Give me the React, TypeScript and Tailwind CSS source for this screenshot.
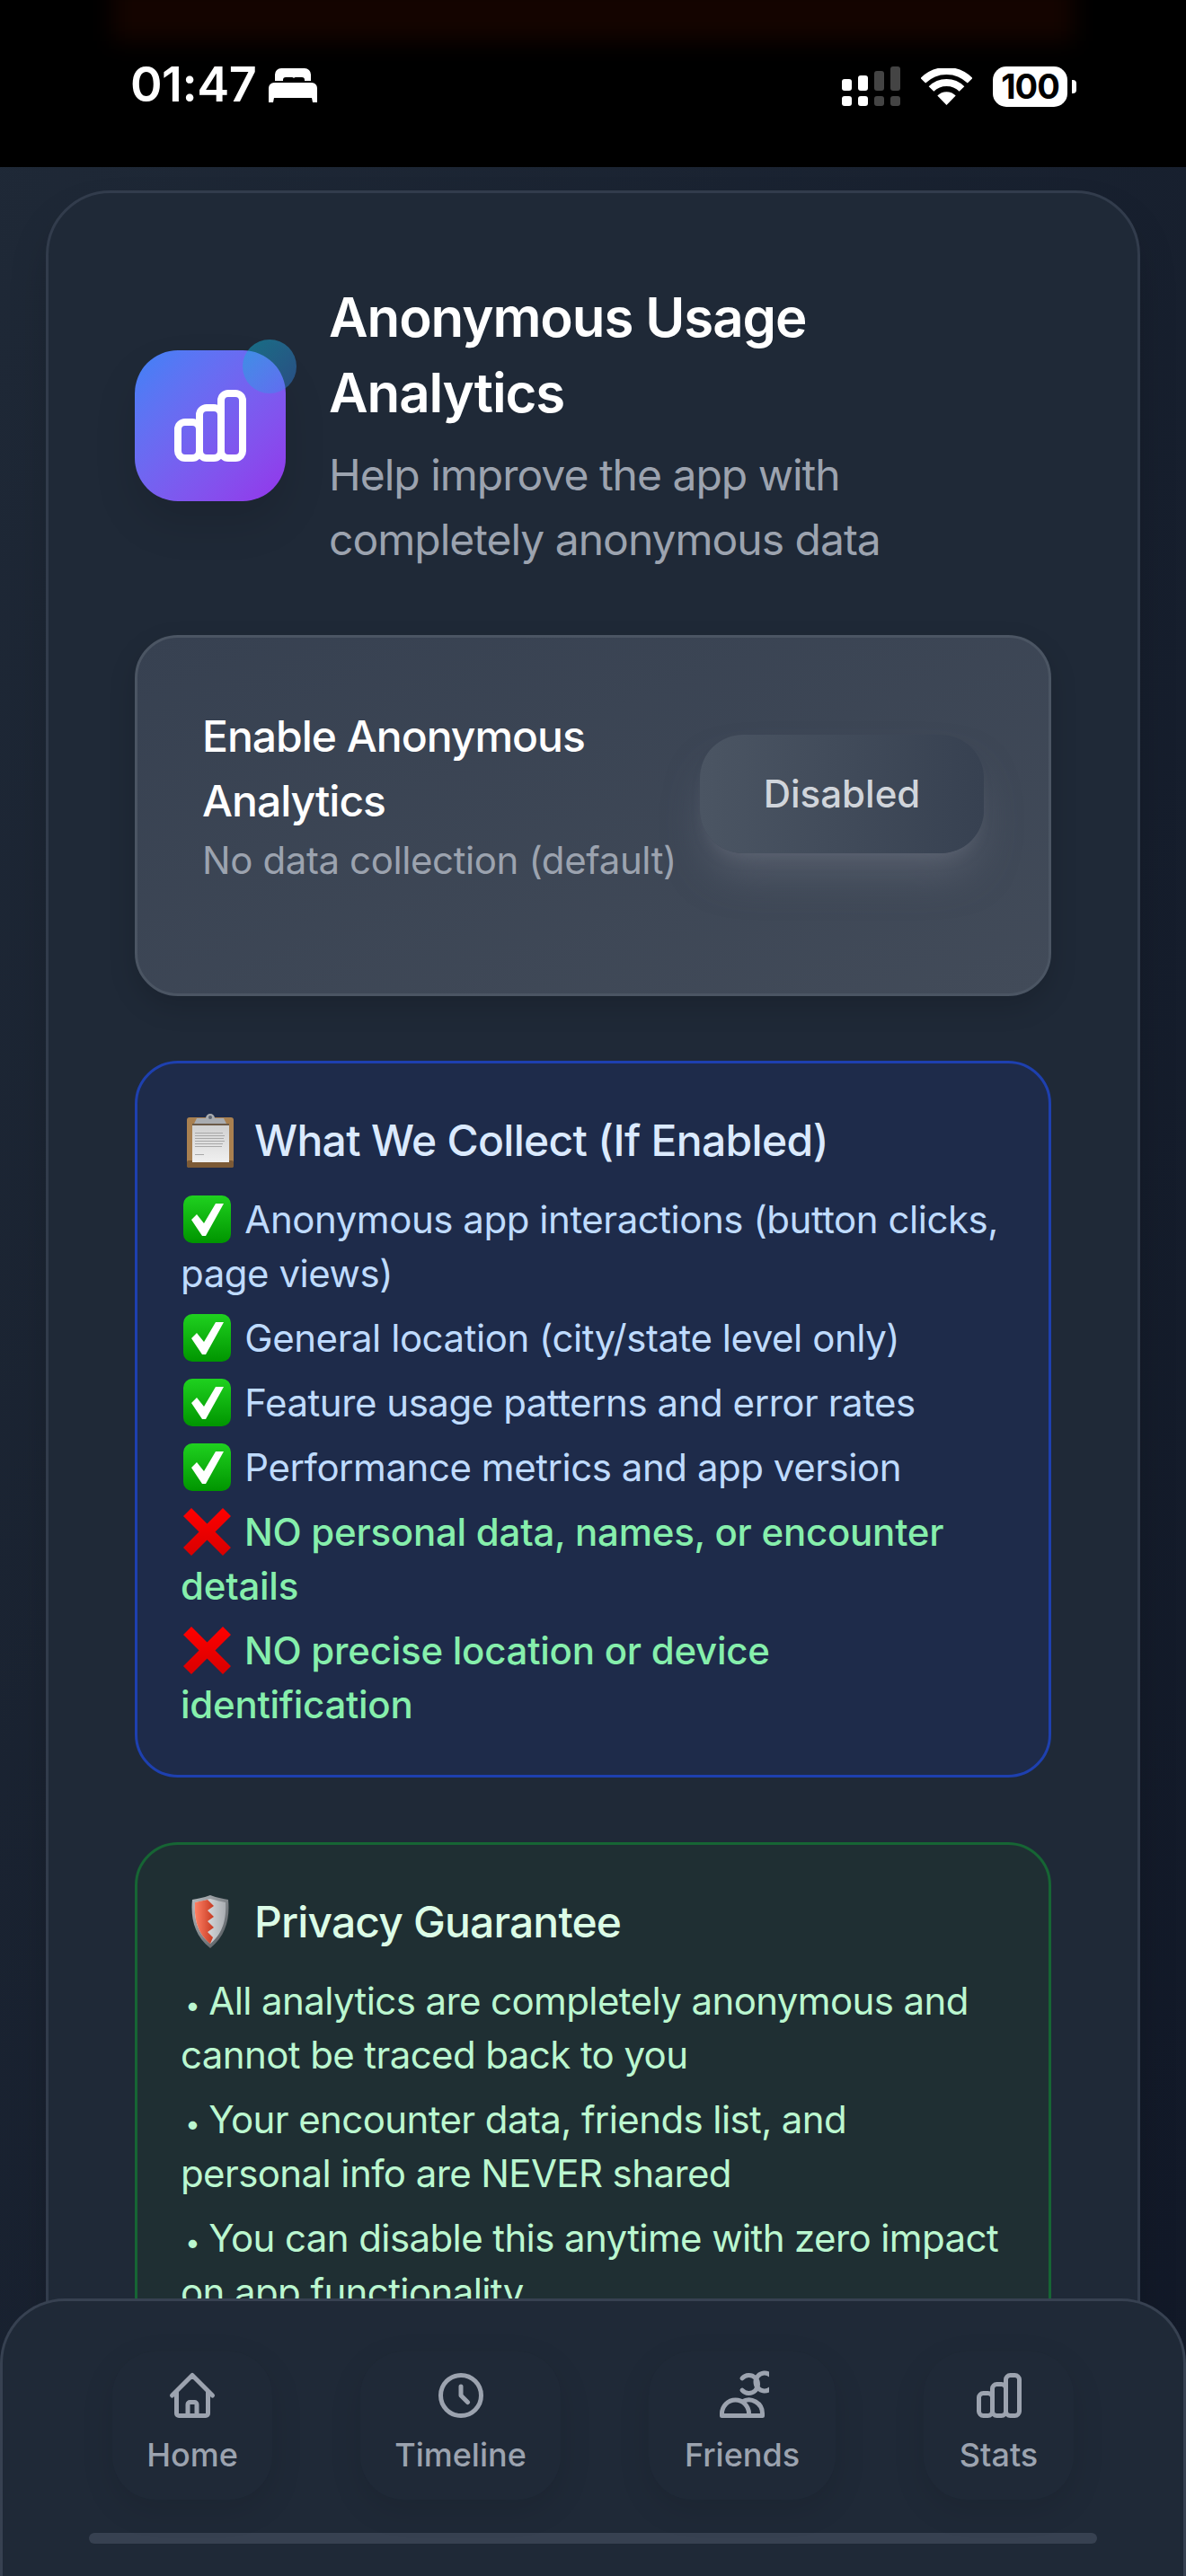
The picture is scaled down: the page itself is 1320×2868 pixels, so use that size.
import React from "react";

function CheckEmoji() {
  return (
    <svg viewBox="0 0 53 53" className="inline-block w-[53px] h-[53px] ml-[3px] mr-[4px] align-[-11px]">
      <defs>
        <linearGradient id="chk" x1="0" y1="0" x2="0" y2="1">
          <stop offset="0" stopColor="#1fd11f" />
          <stop offset="1" stopColor="#009500" />
        </linearGradient>
      </defs>
      <rect width="53" height="53" rx="10" fill="url(#chk)" />
      <path d="M9 27l6-6 8 10L36 9h9L25 45h-4z" fill="#fff" />
    </svg>
  );
}

function CrossEmoji() {
  return (
    <svg viewBox="0 0 53 53" className="inline-block w-[53px] h-[53px] ml-[3px] mr-[4px] align-[-11px]">
      <defs>
        <linearGradient id="crs" x1="0" y1="0" x2="0" y2="1">
          <stop offset="0" stopColor="#ff0000" />
          <stop offset="1" stopColor="#d80000" />
        </linearGradient>
      </defs>
      <path d="M9 0L26.5 17.5 44 0l9 9-17.5 17.5L53 44l-9 9-17.5-17.5L9 53l-9-9 17.5-17.5L0 9z" fill="url(#crs)" />
    </svg>
  );
}

function ClipboardEmoji() {
  return (
    <svg viewBox="0 0 52 60" className="w-[52px] h-[60px] ml-[7px] mr-[23px] shrink-0">
      <defs>
        <linearGradient id="ppr" x1="0" y1="0" x2="0" y2="1">
          <stop offset="0" stopColor="#d0d0d0" />
          <stop offset="1" stopColor="#f0f0f0" />
        </linearGradient>
      </defs>
      <rect x="0" y="4" width="52" height="56" rx="3" fill="#a98050" />
      <rect x="0" y="52" width="52" height="8" rx="2" fill="#7c5a36" />
      <rect x="6" y="12" width="41" height="42" fill="url(#ppr)" />
      <g fill="#a8a8a8">
        <rect x="9" y="21" width="31" height="1" />
        <rect x="9" y="24" width="33" height="1" />
        <rect x="9" y="27" width="32" height="1" />
        <rect x="9" y="30" width="33" height="1" />
        <rect x="9" y="33" width="31" height="1" />
        <rect x="9" y="36" width="30" height="1" />
        <rect x="9" y="45" width="10" height="1" />
      </g>
      <path d="M8 11l3-6h10a5 5 0 0 1 10 0h10l3 6z" fill="#a9acb0" />
      <circle cx="26" cy="4" r="2" fill="#5b6472" />
      <rect x="6" y="11" width="41" height="2" fill="#6c5a48" />
    </svg>
  );
}

function ShieldEmoji() {
  return (
    <svg viewBox="0 0 42 59" className="w-[42px] h-[59px] ml-[12px] mr-[28px] shrink-0">
      <defs>
        <linearGradient id="shd" x1="0" y1="0" x2="1" y2="1">
          <stop offset="0" stopColor="#b8bcc0" />
          <stop offset="1" stopColor="#4d5358" />
        </linearGradient>
        <linearGradient id="shw" x1="0" y1="0" x2="1" y2="0">
          <stop offset="0" stopColor="#f4f4f4" />
          <stop offset="1" stopColor="#a9adb2" />
        </linearGradient>
        <linearGradient id="shr" x1="0" y1="0" x2="1" y2="0">
          <stop offset="0" stopColor="#ff8064" />
          <stop offset="1" stopColor="#c63a22" />
        </linearGradient>
      </defs>
      <path d="M21 0C29 3 36 4 41 5c2 20-2 40-20 54C3 45-1 25 1 5 6 4 13 3 21 0z" fill="url(#shd)" />
      <path d="M21 4c7 2 12 3 17 4 1 17-2 34-17 46C6 42 3 25 4 8c5-1 10-2 17-4z" fill="url(#shw)" />
      <path d="M18 5l7 7-7 5 7 7-7 5 7 7-7 5 6 6-3 7C6 42 3 25 4 8c5-1 9-2 14-3z" fill="url(#shr)" />
    </svg>
  );
}

function ChartIcon({ className }: { className: string }) {
  return (
    <svg viewBox="0 0 24 24" fill="none" stroke="currentColor" strokeWidth={2} strokeLinecap="round" strokeLinejoin="round" className={className}>
      <path d="M9 19v-6a2 2 0 00-2-2H5a2 2 0 00-2 2v6a2 2 0 002 2h2a2 2 0 002-2zm0 0V9a2 2 0 012-2h2a2 2 0 012 2v10m-6 0a2 2 0 002 2h2a2 2 0 002-2m0 0V5a2 2 0 012-2h2a2 2 0 012 2v14a2 2 0 01-2 2h-2a2 2 0 01-2-2z" />
    </svg>
  );
}

function HomeIcon({ className }: { className: string }) {
  return (
    <svg viewBox="0 0 24 24" fill="none" stroke="currentColor" strokeWidth={2} strokeLinecap="round" strokeLinejoin="round" className={className}>
      <path d="M3 12l2-2m0 0l7-7 7 7M5 10v10a1 1 0 001 1h3m10-11l2 2m-2-2v10a1 1 0 01-1 1h-3m-6 0a1 1 0 001-1v-4a1 1 0 011-1h2a1 1 0 011 1v4a1 1 0 001 1m-6 0h6" />
    </svg>
  );
}

function ClockIcon({ className }: { className: string }) {
  return (
    <svg viewBox="0 0 24 24" fill="none" stroke="currentColor" strokeWidth={2} strokeLinecap="round" strokeLinejoin="round" className={className}>
      <path d="M12 8v4l3 3m6-3a9 9 0 11-18 0 9 9 0 0118 0z" />
    </svg>
  );
}

function FriendsIcon({ className }: { className: string }) {
  return (
    <svg viewBox="0 0 24 24" fill="none" stroke="currentColor" strokeWidth={2} strokeLinecap="round" strokeLinejoin="round" className={className}>
      <path d="M12 4.354a4 4 0 110 5.292M15 21H3v-1a6 6 0 0112 0v1zm0 0h6v-1a6 6 0 00-9-5.197" />
      <path d="M24.5 2.88A4 4 0 1 0 24.5 9.12" />
    </svg>
  );
}

const navItems = [
  { label: "Home", Icon: HomeIcon, w: "w-[178px]" },
  { label: "Timeline", Icon: ClockIcon, w: "w-[223px]" },
  { label: "Friends", Icon: FriendsIcon, w: "w-[208px]" },
  { label: "Stats", Icon: ChartIcon, w: "w-[167px]" },
];

const collected = [
  "Anonymous app interactions (button clicks, page views)",
  "General location (city/state level only)",
  "Feature usage patterns and error rates",
  "Performance metrics and app version",
];

const notCollected = [
  "NO personal data, names, or encounter details",
  "NO precise location or device identification",
];

const guarantees = [
  "All analytics are completely anonymous and cannot be traced back to you",
  "Your encounter data, friends list, and personal info are NEVER shared",
  "You can disable this anytime with zero impact on app functionality",
];

function StatusBar() {
  return (
    <header className="relative h-[186px] shrink-0 bg-black flex items-start justify-between pl-[145px] pr-[122px] pt-[68px] overflow-hidden">
      <div className="absolute left-[125px] right-[125px] -top-[20px] h-[66px] bg-[#140400] blur-md" />
      <div className="relative flex items-center gap-[14px] h-[52px]">
        <span className="text-[54px] leading-[52px] font-semibold text-white tracking-[-0.5px]">01:47</span>
        <svg viewBox="0 0 54 38" className="w-[54px] h-[38px] mt-[2px]" fill="#fff">
          <path d="M7 14V7a7 7 0 017-7h26a7 7 0 017 7v7h-7v-1a3 3 0 00-3-3h-7a3 3 0 00-2 1 3 3 0 00-2-1h-7a3 3 0 00-3 3v1z" />
          <path d="M6 16h42a6 6 0 016 6v16h-5l-1-5H6l-1 5H0V22a6 6 0 016-6z" />
        </svg>
      </div>
      <div className="relative flex items-center h-[45px] mt-[6px]">
        <svg viewBox="0 0 66 45" className="w-[66px] h-[45px]">
          <g fill="#fff">
            <rect x="0" y="33" width="11" height="11" rx="3" />
            <rect x="18" y="33" width="11" height="11" rx="3" />
            <rect x="0" y="14" width="11" height="13" rx="3" />
            <rect x="18" y="10" width="11" height="17" rx="3" />
          </g>
          <g fill="#444">
            <rect x="36" y="33" width="11" height="11" rx="3" />
            <rect x="54" y="33" width="11" height="11" rx="3" />
            <rect x="36" y="5" width="11" height="22" rx="3" />
            <rect x="54" y="0" width="11" height="27" rx="3" />
          </g>
        </svg>
        <svg viewBox="0 0 57 41" className="w-[57px] h-[41px] ml-[22px]">
          <path d="M2.3 13.8a37 37 0 0152.4 0" fill="none" stroke="#fff" strokeWidth="8" />
          <path d="M11.5 23a24 24 0 0134 0" fill="none" stroke="#fff" strokeWidth="8" />
          <path d="M28.5 41L18.3 30.6a14.4 14.4 0 0120.4 0z" fill="#fff" />
        </svg>
        <div className="ml-[23px] w-[83px] h-[45px] rounded-[15px] bg-white flex items-center justify-center text-black text-[38px] leading-[45px] font-bold tracking-[-1px]">
          100
        </div>
        <div className="ml-[5px] w-[5px] h-[15px] rounded-r-[4px] bg-white" />
      </div>
    </header>
  );
}

export default function App() {
  return (
    <div className="relative h-[2868px] w-[1320px] overflow-hidden bg-gradient-to-br from-[#1f2937] to-[#111827] font-[Inter,sans-serif]">
      <StatusBar />
      <main className="pt-[26px] px-[51px]">
        <section className="rounded-[72px] border-[3px] border-[#323c4c] bg-[#1f2937] px-[96px] pt-[96px] shadow-2xl h-[2700px]">
          <div className="flex items-center gap-[48px] mb-[70px]">
            <div className="relative shrink-0 w-[168px] h-[168px] rounded-[48px] bg-gradient-to-br from-[#3b82f6] to-[#9333ea] flex items-center justify-center text-white shadow-[0_24px_48px_rgba(0,0,0,0.12)]">
              <ChartIcon className="w-[96px] h-[96px]" />
              <div className="absolute -top-[12px] -right-[12px] w-[60px] h-[60px] rounded-full bg-gradient-to-br from-[#06b6d4]/50 to-[#3b82f6]/40" />
            </div>
            <div>
              <h1 className="text-[60px] leading-[84px] font-semibold text-white mb-[14px] tracking-[-1.1px]">Anonymous Usage Analytics</h1>
              <p className="text-[48px] leading-[72px] text-[#9ca3af] tracking-[-1px]">Help improve the app with completely anonymous data</p>
            </div>
          </div>

          <div className="rounded-[48px] border-[3px] border-[#4b5563] bg-gradient-to-br from-[#374151] to-[#424b59] p-[72px] pb-[120px] mb-[72px] shadow-[0_12px_30px_rgba(0,0,0,0.15)]">
            <div className="flex items-center justify-between">
              <div className="w-[540px] translate-y-[2px]">
                <div className="text-[48px] leading-[72px] font-medium text-white tracking-[-1px]">Enable Anonymous Analytics</div>
                <div className="text-[42px] leading-[60px] text-[#9ca3af] tracking-[-0.4px]">No data collection (default)</div>
              </div>
              <button className="w-[316px] h-[132px] rounded-[48px] bg-gradient-to-r from-[#4b5563] to-[#374151] text-[42px] leading-[60px] font-medium text-[#d1d5db] shadow-[0_30px_45px_-9px_rgba(107,114,128,0.5),0_12px_18px_-12px_rgba(107,114,128,0.5)]">
                Disabled
              </button>
            </div>
          </div>

          <div className="rounded-[48px] border-[3px] border-[#1e40af] bg-[#1e2b4a] p-[48px] mb-[72px]">
            <h2 className="flex items-center h-[72px] pt-[3px] mb-[24px] text-[48px] font-medium text-[#dbeafe] tracking-[-0.7px]">
              <ClipboardEmoji />
              What We Collect (If Enabled)
            </h2>
            <ul className="flex flex-col gap-[12px] text-[42px] leading-[60px]">
              {collected.map((t) => (
                <li key={t} className="text-[#bfdbfe] tracking-[-0.46px]">
                  <CheckEmoji />
                  <span> {t}</span>
                </li>
              ))}
              {notCollected.map((t) => (
                <li key={t} className="text-[#86efac] font-medium tracking-[-0.25px]">
                  <CrossEmoji />
                  <span> {t}</span>
                </li>
              ))}
            </ul>
          </div>

          <div className="rounded-[48px] border-[3px] border-[#166534] bg-[#1f2f33] p-[48px]">
            <h2 className="flex items-center h-[72px] pt-[3px] mb-[24px] text-[48px] font-medium text-[#dcfce7] tracking-[-0.85px]">
              <ShieldEmoji />
              Privacy Guarantee
            </h2>
            <ul className="flex flex-col gap-[12px] text-[42px] leading-[60px] text-[#bbf7d0] tracking-[-0.6px]">
              {guarantees.map((t) => (
                <li key={t} className="before:content-['•'] before:text-[30px] before:leading-[30px] before:ml-[5px] before:mr-[10px]">
                  {t}
                </li>
              ))}
            </ul>
          </div>
        </section>
      </main>

      <nav className="absolute left-0 right-0 bottom-0 h-[309px] rounded-t-[72px] border-x-[3px] border-t-[3px] border-[#374151] bg-[#1f2937] pt-[56px]">
        <div className="flex justify-center gap-[98px]">
          {navItems.map(({ label, Icon, w }) => (
            <button
              key={label}
              className={`${w} h-[165px] rounded-[48px] bg-[#1f2937] flex flex-col items-center pt-[19px] shadow-[0_12px_36px_rgba(0,0,0,0.1)] text-[#9ca3af]`}
            >
              <Icon className="w-[60px] h-[60px]" />
              <span className="mt-[12px] text-[36px] leading-[48px] font-medium">{label}</span>
            </button>
          ))}
        </div>
        <div className="mt-[37px] mx-[96px] h-[12px] rounded-full bg-[#374151]" />
      </nav>
    </div>
  );
}
